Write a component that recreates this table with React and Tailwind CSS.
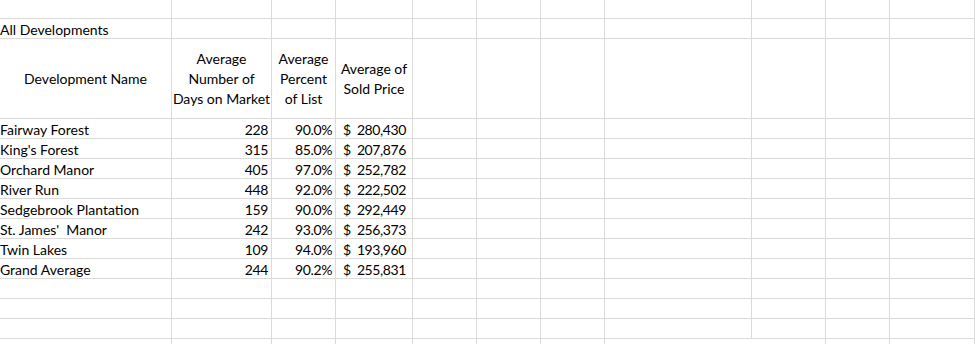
import React from "react";

const COLS = "grid grid-cols-[172px_100px_64px_77px_64px_64px_64px_147px_74px_64px_1fr]";
const CELL = "border-r border-b border-[#dadada] overflow-visible whitespace-nowrap";
const TEXT = "flex items-end leading-[16px]";
const NUM = "flex items-end leading-[16px] tracking-[-0.4px]";

const rows = [
  { name: "Fairway Forest", days: 228, pct: "90.0%", price: "280,430" },
  { name: "King's Forest", days: 315, pct: "85.0%", price: "207,876" },
  { name: "Orchard Manor", days: 405, pct: "97.0%", price: "252,782" },
  { name: "River Run", days: 448, pct: "92.0%", price: "222,502" },
  { name: "Sedgebrook Plantation", days: 159, pct: "90.0%", price: "292,449" },
  { name: "St. James'\u00a0 Manor", days: 242, pct: "93.0%", price: "256,373" },
  { name: "Twin Lakes", days: 109, pct: "94.0%", price: "193,960" },
  { name: "Grand Average", days: 244, pct: "90.2%", price: "255,831" },
];

function EmptyCells({ count }) {
  return Array.from({ length: count }).map((_, i) => <div key={i} className={CELL} />);
}

function Row({ height, children }) {
  return <div className={`${COLS} ${height}`}>{children}</div>;
}

export default function App() {
  return (
    <div
      className="h-[344px] w-[975px] overflow-hidden bg-white text-[14px] text-black"
      style={{ fontFamily: "Lato, 'Open Sans', sans-serif" }}
    >
      <Row height="h-[19px]">
        <EmptyCells count={11} />
      </Row>
      <Row height="h-[20px]">
        <div className={`${CELL} ${TEXT}`}>All Developments</div>
        <EmptyCells count={10} />
      </Row>
      <Row height="h-[80px]">
        <div className={`${CELL} flex items-center justify-center pt-[1px] leading-5`}>Development Name</div>
        <div className={`${CELL} flex flex-col items-center justify-center leading-5`}>
          <span>Average</span>
          <span>Number of</span>
          <span>Days on Market</span>
        </div>
        <div className={`${CELL} flex flex-col items-center justify-center leading-5`}>
          <span>Average</span>
          <span>Percent</span>
          <span>of List</span>
        </div>
        <div className={`${CELL} flex flex-col items-center justify-center leading-5`}>
          <span>Average of</span>
          <span>Sold Price</span>
        </div>
        <EmptyCells count={7} />
      </Row>
      {rows.map((r) => (
        <Row key={r.name} height="h-[20px]">
          <div className={`${CELL} ${TEXT}`}>{r.name}</div>
          <div className={`${CELL} ${NUM} justify-end pr-[3px]`}>{r.days}</div>
          <div className={`${CELL} ${NUM} justify-end pr-[3px]`}>{r.pct}</div>
          <div className={`${CELL} ${NUM} justify-between pl-[7px] pr-[6px]`}>
            <span>$</span>
            <span>{r.price}</span>
          </div>
          <EmptyCells count={7} />
        </Row>
      ))}
      {[0, 1, 2].map((i) => (
        <Row key={`e${i}`} height="h-[20px]">
          <EmptyCells count={11} />
        </Row>
      ))}
      <Row height="h-[20px]">
        <EmptyCells count={7} />
        <div className={`${CELL} col-span-2`} />
        <EmptyCells count={2} />
      </Row>
    </div>
  );
}
